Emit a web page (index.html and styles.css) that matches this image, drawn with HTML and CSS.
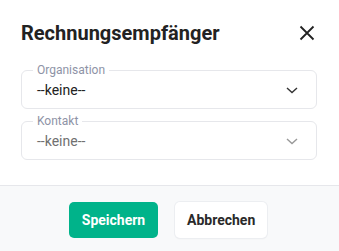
FILE: index.html
```html
<!DOCTYPE html>
<html lang="de">
<head>
<meta charset="utf-8">
<link rel="stylesheet" href="styles.css">
</head>
<body>
<div class="modal">
  <div class="header">
    <h1 class="title">Rechnungsempfänger</h1>
    <button class="close" aria-label="Schließen">
      <svg width="16" height="16" viewBox="0 0 16 16"><path d="M1.5 1.5 L14.5 14.5 M14.5 1.5 L1.5 14.5" stroke="#222" stroke-width="1.8" fill="none"/></svg>
    </button>
  </div>
  <div class="body">
    <div class="field">
      <span class="label">Organisation</span>
      <span class="value">--keine--</span>
      <svg class="chev" width="12" height="7" viewBox="0 0 12 7"><path d="M1 1 L6 5.5 L11 1" stroke="#333" stroke-width="1.4" fill="none"/></svg>
    </div>
    <div class="field disabled">
      <span class="label">Kontakt</span>
      <span class="value">--keine--</span>
      <svg class="chev" width="12" height="7" viewBox="0 0 12 7"><path d="M1 1 L6 5.5 L11 1" stroke="#999" stroke-width="1.4" fill="none"/></svg>
    </div>
  </div>
  <div class="footer">
    <button class="btn primary">Speichern</button>
    <button class="btn secondary">Abbrechen</button>
  </div>
</div>
</body>
</html>
```
FILE: styles.css
```css
html, body {
  margin: 0;
  padding: 0;
  background: #fff;
  font-family: Roboto, "Liberation Sans", sans-serif;
}
.modal {
  width: 339px;
  height: 251px;
  display: flex;
  flex-direction: column;
}
.header {
  display: flex;
  align-items: center;
  justify-content: space-between;
  padding: 21px 24px 0 21px;
  height: 24px;
}
.title {
  margin: 0;
  font-size: 20px;
  font-weight: 700;
  color: #222;
  line-height: 24px;
}
.close {
  border: 0;
  background: none;
  padding: 0;
  width: 16px;
  height: 16px;
  display: flex;
}
.body {
  padding: 25px 22px 0 21px;
  display: flex;
  flex-direction: column;
  gap: 12px;
  height: 140px;
  box-sizing: border-box;
}
.field {
  position: relative;
  display: flex;
  align-items: center;
  justify-content: space-between;
  height: 39px;
  box-sizing: border-box;
  border: 1px solid #e6e7eb;
  border-radius: 6px;
  padding: 1px 18px 0 15px;
}
.label {
  position: absolute;
  left: 11px;
  top: -8px;
  font-size: 12px;
  line-height: 14px;
  color: #8e93a6;
  padding: 0 4px;
  background: #fff;
}
.value {
  font-size: 14px;
  color: #222;
}
.disabled .value {
  color: #707070;
}
.footer {
  flex: 1;
  border-top: 1px solid #e6e7eb;
  background: #f8f9fa;
  display: flex;
  justify-content: center;
  align-items: flex-start;
  gap: 17px;
  padding: 16px 3px 0 0;
}
.btn {
  font-family: Roboto, "Liberation Sans", sans-serif;
  font-size: 14px;
  font-weight: 700;
  height: 36px;
  border-radius: 5px;
  padding: 0 12px;
  border: 0;
}
.primary {
  background: #00b38a;
  color: #fff;
  width: 89px;
}
.secondary {
  background: #fff;
  color: #2a2a2a;
  width: 92px;
  box-shadow: 0 0 0 1px #eceef1, 0 1px 2px rgba(0,0,0,0.06);
}
```
